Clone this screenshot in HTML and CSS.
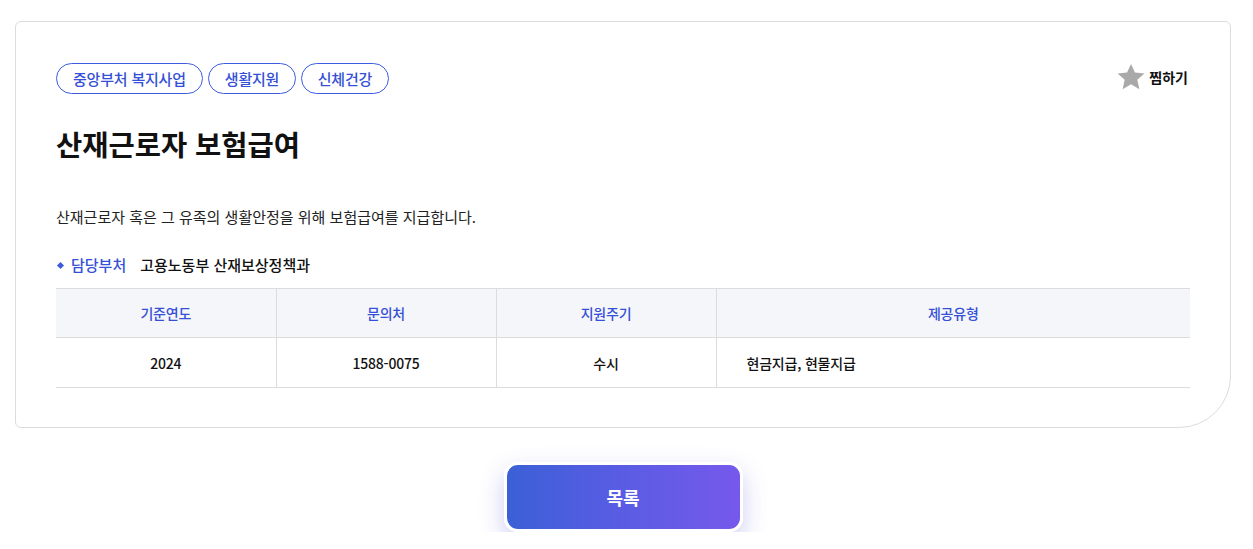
FILE: index.html
```html
<!DOCTYPE html>
<html lang="ko">
<head>
<meta charset="utf-8">
<link rel="stylesheet" href="styles.css">
</head>
<body>
<div class="page">
  <section class="card">
    <div class="top">
      <div class="tags">
        <span class="tag">중앙부처 복지사업</span>
        <span class="tag">생활지원</span>
        <span class="tag">신체건강</span>
      </div>
      <button class="fav">
        <svg width="28" height="28" viewBox="0 0 24 24"><path d="M12 0.8l3.4 7.4 8.1.8-6.1 5.4 1.8 8L12 18.2l-7.2 4.2 1.8-8L.5 9l8.1-.8z" fill="#a9a9a9"/></svg>
        <span>찜하기</span>
      </button>
    </div>
    <h1 class="title">산재근로자 보험급여</h1>
    <p class="desc">산재근로자 혹은 그 유족의 생활안정을 위해 보험급여를 지급합니다.</p>
    <div class="dept">
      <span class="dept-label">담당부처</span>
      <span class="dept-value">고용노동부 산재보상정책과</span>
    </div>
    <table class="info">
      <thead>
        <tr><th class="c1">기준연도</th><th class="c2">문의처</th><th class="c3">지원주기</th><th>제공유형</th></tr>
      </thead>
      <tbody>
        <tr><td>2024</td><td>1588-0075</td><td>수시</td><td class="left">현금지급, 현물지급</td></tr>
      </tbody>
    </table>
  </section>
  <div class="actions">
    <button class="list-btn">목록</button>
  </div>
</div>
</body>
</html>
```
FILE: styles.css
```css
* { box-sizing: border-box; }
html, body { margin: 0; padding: 0; background: #fff; }
body {
  font-family: "Noto Sans CJK KR", "Noto Sans", sans-serif;
  color: #111;
}
.page { padding: 21px 22px 0 15px; }
.card {
  border: 1px solid #dcdcdc;
  border-radius: 6px 6px 52px 6px;
  padding: 41px 40px 40px 40px;
  height: 407px;
}
.top {
  display: flex;
  justify-content: space-between;
  align-items: flex-start;
}
.tags { display: flex; gap: 5px; }
.tag {
  height: 31px;
  padding: 0 16px;
  border: 1px solid #3d5ce0;
  border-radius: 16px;
  color: #3550d6;
  font-size: 15px;
  font-weight: 500;
  line-height: 29px;
  letter-spacing: -0.2px;
}
.tag:last-child { padding: 0 15.5px; }
.fav {
  display: flex;
  align-items: center;
  gap: 4px;
  background: none;
  border: 0;
  padding: 0;
  margin-top: 0;
  margin-right: 2px;
  font-family: inherit;
  font-size: 14px;
  font-weight: 700;
  color: #111;
  cursor: pointer;
}
.title {
  margin: 30px 0 0;
  font-size: 28.5px;
  font-weight: 700;
  line-height: 40px;
  letter-spacing: 0;
}
.desc {
  margin: 42px 0 0;
  font-size: 15px;
  line-height: 22px;
  color: #222;
  letter-spacing: 0;
}
.dept {
  display: flex;
  align-items: center;
  margin-top: 26px;
  font-size: 15px;
  line-height: 22px;
  font-weight: 500;
}
.dept-label {
  position: relative;
  padding-left: 15px;
  color: #3550d6;
}
.dept-label::before {
  content: "";
  position: absolute;
  left: 2px;
  top: 9px;
  width: 5px;
  height: 5px;
  background: #3d5ce0;
  transform: rotate(45deg);
}
.dept-value { margin-left: 14px; color: #111; }
.info {
  width: 100%;
  margin-top: 12px;
  border-collapse: collapse;
  font-size: 14px;
  letter-spacing: -0.2px;
}
.info th, .info td {
  height: 49px;
  text-align: center;
  border-top: 1px solid #dcdcdc;
  border-bottom: 1px solid #dcdcdc;
  border-left: 1px solid #dcdcdc;
  padding: 0;
}
.info th:first-child, .info td:first-child { border-left: 0; }
.info th {
  background: #f5f6fa;
  color: #3550d6;
  font-weight: 500;
}
.info td { font-weight: 500; color: #111; height: 50px; }
.info .c1, .info .c2, .info .c3 { width: 220px; }
.info td.left { text-align: left; padding-left: 30px; }
.actions {
  display: flex;
  justify-content: center;
  padding-top: 34px;
}
.list-btn {
  width: 239px;
  height: 70px;
  border: 3px solid #fff;
  border-radius: 14px;
  background: linear-gradient(90deg, #3b60d6 0%, #5a5ce4 50%, #7659ec 100%);
  color: #fff;
  font-family: inherit;
  font-size: 18px;
  font-weight: 700;
  box-shadow: 0 10px 24px rgba(90, 90, 215, 0.3);
  cursor: pointer;
}
```
